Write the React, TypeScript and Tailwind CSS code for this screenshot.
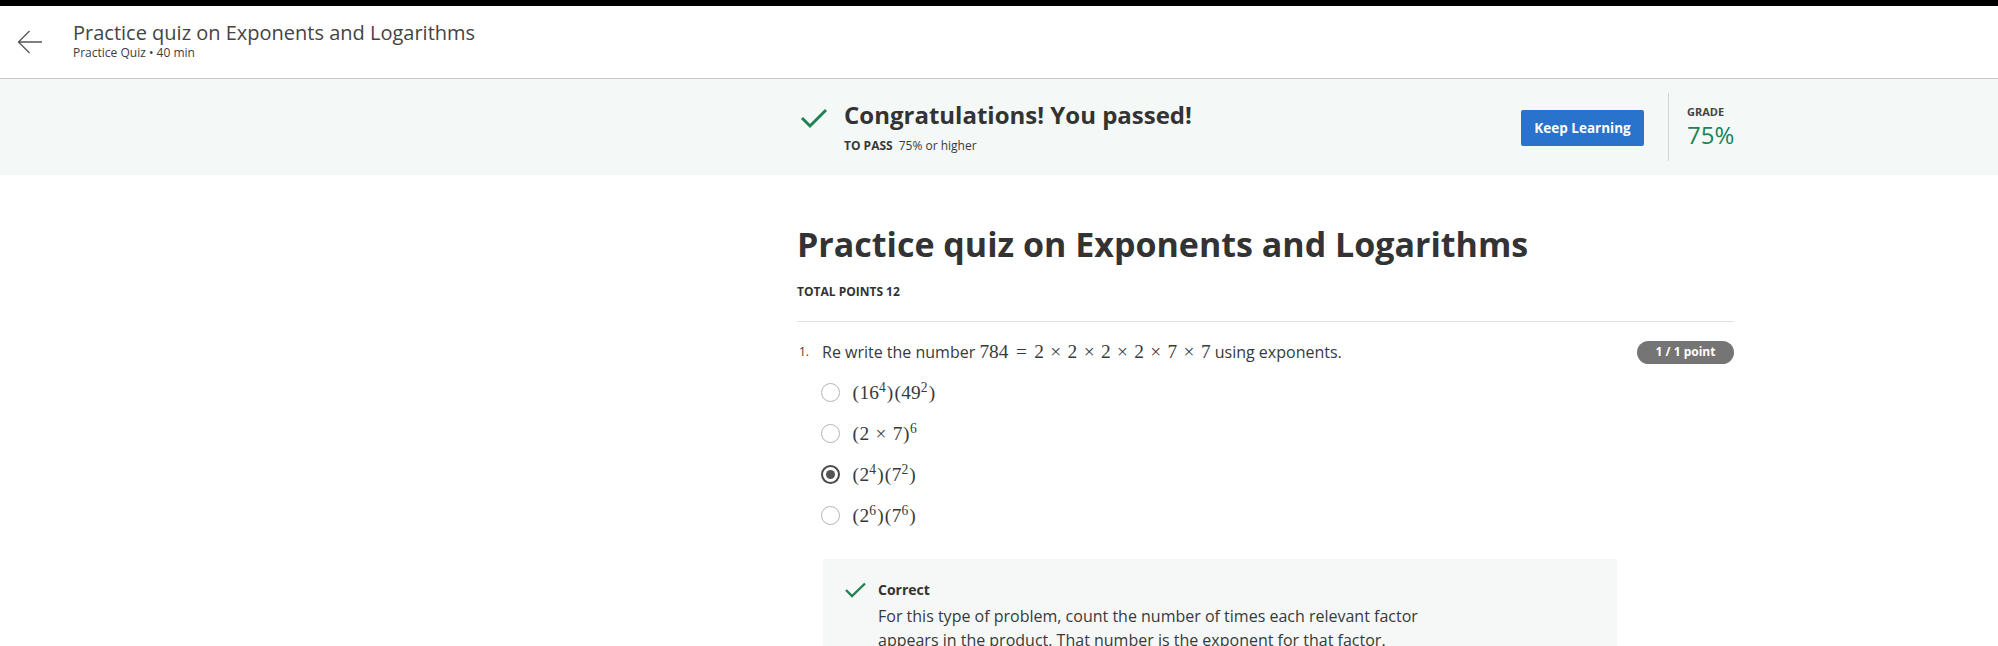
import React from "react";

const M = ({ children }: { children: React.ReactNode }) => (
  <span className="font-['Liberation_Serif',serif] text-[19.36px] leading-none">{children}</span>
);
const Op = ({ c, eq }: { c: string; eq?: boolean }) => (
  <span className={"inline-block w-[0.778em] text-center " + (eq ? "mx-[0.278em]" : "mx-[0.222em]")}>{c}</span>
);
const Sup = ({ children }: { children: React.ReactNode }) => (
  <span className="text-[0.7em] relative top-[-0.5em] leading-none pr-[0.05em]">{children}</span>
);
const P = ({ c }: { c: string }) => <span className="inline-block w-[0.389em] text-center">{c}</span>;

function Radio({ checked }: { checked?: boolean }) {
  return checked ? (
    <span className="w-[19px] h-[19px] rounded-full border-2 border-[#4a4a4a] flex items-center justify-center">
      <span className="w-[9px] h-[9px] rounded-full bg-[#555555]" />
    </span>
  ) : (
    <span className="w-[19px] h-[19px] rounded-full border-[1.5px] border-[#b5b5b5]" />
  );
}

export default function App() {
  const options: { el: React.ReactNode; checked?: boolean }[] = [
    { el: <M><P c="(" />16<Sup>4</Sup><P c=")" /><P c="(" />49<Sup>2</Sup><P c=")" /></M> },
    { el: <M><P c="(" />2<Op c="×" />7<P c=")" /><Sup>6</Sup></M> },
    { el: <M><P c="(" />2<Sup>4</Sup><P c=")" /><P c="(" />7<Sup>2</Sup><P c=")" /></M>, checked: true },
    { el: <M><P c="(" />2<Sup>6</Sup><P c=")" /><P c="(" />7<Sup>6</Sup><P c=")" /></M> },
  ];
  return (
    <div className="w-[1998px] h-[646px] overflow-hidden bg-white font-['Open_Sans',sans-serif] text-[#373a3c]">
      <div className="h-[6px] bg-black" />
      <header className="h-[73px] border-b border-[#c6c6c6] flex items-start">
        <div className="pl-[17px] pt-[24px]">
          <svg width="26" height="24" viewBox="0 0 26 24" fill="none" stroke="#555" strokeWidth="1.3">
            <path d="M25 12H1.5M12.5 1L1.5 12l11 11" />
          </svg>
        </div>
        <div className="ml-[30px] pt-[14px] flex flex-col">
          <div className="text-[20px] leading-[26px] text-[#444]">Practice quiz on Exponents and Logarithms</div>
          <div className="text-[12px] leading-[15px] text-[#3c3c3c] mt-[-1px]">Practice Quiz • 40 min</div>
        </div>
      </header>
      <section className="h-[96px] bg-[#f4f8f7]">
        <div className="ml-[797px] w-[937px] h-full flex items-center">
          <svg width="28" height="22" viewBox="0 0 28 22" fill="none" stroke="#1f8354" strokeWidth="3" className="ml-[3px] mt-[-18px]">
            <path d="M2 11l8 8L26 3" />
          </svg>
          <div className="ml-[16px] flex flex-col">
            <div className="text-[24px] leading-[30px] font-bold text-[#333]">Congratulations! You passed!</div>
            <div className="text-[12px] leading-[16px] mt-[8px]">
              <span className="font-bold">TO PASS</span>
              <span className="ml-[6px]">75% or higher</span>
            </div>
          </div>
          <div className="flex-1" />
          <button className="w-[123px] h-[36px] mt-[2px] rounded-[2px] bg-[#2a73cc] text-white text-[13.5px] font-bold">Keep Learning</button>
          <div className="w-px h-[68px] bg-[#d6d6d6] ml-[24px]" />
          <div className="ml-[18px] w-[47px] flex flex-col">
            <div className="text-[11px] leading-[14px] font-bold text-[#444]">GRADE</div>
            <div className="text-[24px] leading-[28px] mt-[2px] text-[#1f8354]">75%</div>
          </div>
        </div>
      </section>
      <main className="ml-[797px] w-[937px]">
        <h1 className="mt-[47px] text-[34px] leading-[44px] font-bold text-[#333]">Practice quiz on Exponents and Logarithms</h1>
        <div className="mt-[18px] text-[12px] leading-[16px] font-bold text-[#333]">TOTAL POINTS 12</div>
        <div className="mt-[21px] h-px bg-[#e1e1e1]" />
        <div className="mt-[18px] flex items-center justify-between">
          <div className="flex items-center text-[16px] leading-[24px]">
            <span className="text-[12px] w-[25px] pl-[2px]">1.</span>
            <span>
              Re write the number{" "}
              <M>784<Op c="=" eq />2<Op c="×" />2<Op c="×" />2<Op c="×" />2<Op c="×" />7<Op c="×" />7</M>{" "}
              using exponents.
            </span>
          </div>
          <span className="h-[23px] w-[97px] rounded-full bg-[#757575] text-white text-[12px] font-bold flex items-center justify-center">1 / 1 point</span>
        </div>
        <div className="mt-[8px] flex flex-col">
          {options.map((o, i) => (
            <div key={i} className="h-[41px] flex items-center pl-[24px]">
              <Radio checked={o.checked} />
              <span className="ml-[12px]">{o.el}</span>
            </div>
          ))}
        </div>
        <div className="mt-[23px] ml-[26px] w-[794px] h-[120px] bg-[#f5f8f7] pt-[20px] pl-[22px]">
          <div className="flex items-center">
            <svg width="21" height="16" viewBox="0 0 21 16" fill="none" stroke="#1f8354" strokeWidth="2.4">
              <path d="M1 8l6 6L20 1.5" />
            </svg>
            <span className="ml-[12px] text-[14px] font-bold text-[#333]">Correct</span>
          </div>
          <p className="ml-[33px] mt-[4px] text-[16px] leading-[24px]">
            For this type of problem, count the number of times each relevant factor
            <br />
            appears in the product. That number is the exponent for that factor.
          </p>
        </div>
      </main>
    </div>
  );
}
